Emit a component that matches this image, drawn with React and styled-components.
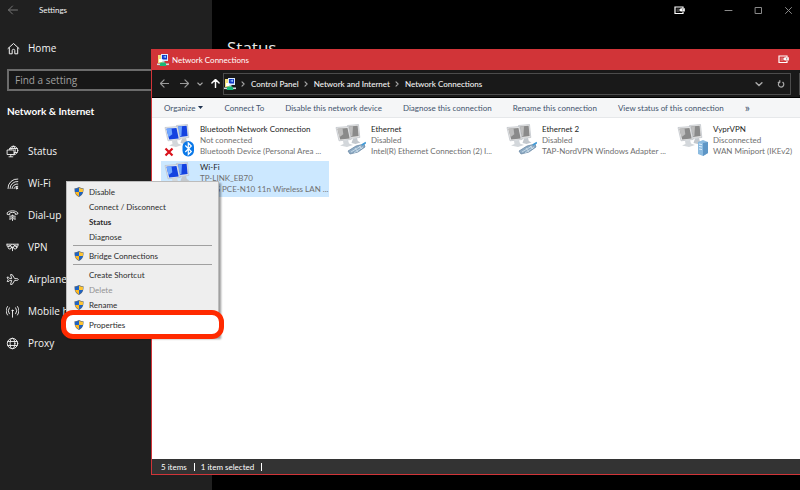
import styled, { createGlobalStyle, css } from 'styled-components';

const GlobalStyle = createGlobalStyle`
  * {
    box-sizing: border-box;
  }

  body {
    margin: 0;
    background-color: #000;
    font-family: 'Open Sans', 'Noto Sans', sans-serif;
  }

  button,
  input {
    margin: 0;
    padding: 0;
    border: none;
    background: none;
    font: inherit;
    color: inherit;
    text-align: left;
  }

  svg {
    display: block;
    flex-shrink: 0;
  }
`;

const Desktop = styled.div`
  position: relative;
  min-height: 100vh;
  display: flex;
  overflow: hidden;
  color: #fff;
`;

const Sidebar = styled.aside`
  width: 212px;
  flex-shrink: 0;
  background-color: #202020;
`;

const SettingsBar = styled.div`
  height: 20px;
  padding-left: 8px;
  display: flex;
  align-items: center;
  gap: 21px;
  font-family: Lato, 'Open Sans', sans-serif;
  font-size: 8px;
  color: #f2f2f2;
`;

const HomeLink = styled.a`
  height: 20px;
  margin-top: 18px;
  padding-left: 7px;
  display: flex;
  align-items: center;
  gap: 8px;
  font-size: 10px;
  color: #f4f4f4;
  text-decoration: none;
`;

const SearchInput = styled.input`
  display: block;
  width: 198px;
  height: 22px;
  margin: 11px 7px 0;
  padding: 0 6px;
  border: 2px solid #6b6b6b;
  background-color: #171717;
  font-size: 10px;

  &::placeholder {
    color: #a0a0a0;
    opacity: 1;
  }
`;

const GroupTitle = styled.h2`
  line-height: 16px;
  margin: 12px 7px 16px;
  font-family: Lato, 'Open Sans', sans-serif;
  font-size: 10px;
  font-weight: 700;
`;

const NavLink = styled.a`
  height: 32px;
  padding-left: 6px;
  display: flex;
  align-items: center;
  gap: 9px;
  font-size: 10px;
  color: #f4f4f4;
  text-decoration: none;
  white-space: nowrap;
`;

const Main = styled.main`
  flex-grow: 1;
  background-color: #000;
`;

const WindowButtons = styled.div`
  height: 20px;
  padding-right: 7px;
  display: flex;
  align-items: center;
  justify-content: flex-end;
  gap: 21px;

  button:first-child {
    margin-right: 18px;
  }
`;

const PageTitle = styled.h1`
  line-height: 24px;
  margin: 16px 0 0 15px;
  font-size: 17px;
  font-weight: 400;
  color: #e8e8e8;
`;

const Explorer = styled.section`
  position: absolute;
  top: 49px;
  right: 0;
  bottom: 15px;
  left: 151px;
  display: flex;
  flex-direction: column;
  border-left: 1px solid #d13438;
  border-bottom: 1px solid #d13438;
  background-color: #fff;
  font-family: Lato, 'Open Sans', sans-serif;
  font-size: 8px;
`;

const TitleBar = styled.header`
  height: 21px;
  padding: 0 11px 0 5px;
  display: flex;
  align-items: center;
  gap: 3px;
  background-color: #d13438;

  button {
    margin-left: auto;
  }
`;

const NavBar = styled.div`
  height: 28px;
  padding-left: 8px;
  display: flex;
  align-items: center;
  background-color: #191919;
  border-bottom: 1px solid #000;
`;

const NavButtons = styled.div`
  width: 63px;
  display: flex;
  align-items: center;
  gap: 8px;
  flex-shrink: 0;

  button:first-child {
    margin-right: 3px;
  }
`;

const AddressBar = styled.div`
  height: 22px;
  flex-grow: 1;
  padding-right: 5px;
  display: flex;
  align-items: center;
  border: 1px solid #4c4c4c;
  white-space: nowrap;
`;

const Crumb = styled.a`
  display: flex;
  align-items: center;
  color: #f4f4f4;
  font-weight: 500;
  text-decoration: none;

  svg {
    margin: 0 5px 0 4px;
  }
`;

const AddressActions = styled.div`
  margin-left: auto;
  display: flex;
  gap: 14px;
`;

const SearchBox = styled.div`
  width: 1px;
  height: 22px;
  margin-left: 8px;
  background-color: #4c4c4c;
`;

const CommandBar = styled.div`
  height: 20px;
  padding-left: 12px;
  display: flex;
  align-items: center;
  gap: 21px;
  background-color: #f5f6f7;
  border-bottom: 1px solid #e6e8ea;
  color: #43546d;
  white-space: nowrap;
`;

const Command = styled.button`
  display: flex;
  align-items: center;
  gap: 3px;
`;

const Overflow = styled(Command)`
  font-size: 12px;
  line-height: 12px;
`;

const Connections = styled.div`
  flex-grow: 1;
  padding: 5px 0 0 9px;
  display: grid;
  grid-template-columns: repeat(4, 168px);
  grid-auto-rows: 36px;
  gap: 2px 3px;
  overflow: hidden;
`;

const ConnectionItem = styled.button`
  padding: 1px 3px;
  display: flex;
  gap: 5px;
  color: #6f6f6f;
  line-height: 11px;
  white-space: nowrap;

  ${({ $selected }) =>
    $selected &&
    css`
      background-color: #cce8ff;
    `}
`;

const ConnectionName = styled.div`
  color: #1e1e1e;
`;

const StatusBar = styled.footer`
  height: 15px;
  padding-left: 9px;
  display: flex;
  align-items: center;
  background-color: #333;

  span {
    padding-right: 7px;
    margin-right: 6px;
    line-height: 8px;
    border-right: 1px solid #fff;
  }
`;

const Menu = styled.div`
  position: absolute;
  top: 181px;
  left: 66px;
  width: 153px;
  padding: 2px 0 4px;
  border: 1px solid #bcbcbc;
  background-color: #eee;
  box-shadow: 2px 2px 2px rgba(0, 0, 0, 0.4);
  font-family: Lato, 'Open Sans', sans-serif;
  font-size: 8px;
  color: #2c2c2c;
`;

const MenuItem = styled.button`
  position: relative;
  width: 100%;
  height: 15px;
  padding-left: 7px;
  display: flex;
  align-items: center;
  gap: 5px;
  font-weight: ${({ $default }) => ($default ? 700 : 400)};

  &:disabled {
    color: #939393;
  }
`;

const IconSlot = styled.span`
  width: 10px;
  height: 10px;
`;

const Separator = styled.hr`
  height: 1px;
  margin: 1px 6px 2px;
  border: none;
  background-color: #a0a0a0;
`;

const Highlight = styled.span`
  position: absolute;
  inset: -7px -6px;
  border: 5px solid #ff2a00;
  border-radius: 12px;
  background-color: #fff;
`;

const HighlightedItem = styled(MenuItem)`
  margin-top: 5px;

  > :not(${Highlight}) {
    position: relative;
  }
`;

const LineIcon = ({ size = 13, box = 13, children, ...rest }) => (
  <svg
    width={size}
    height={size}
    viewBox={`0 0 ${box} ${box}`}
    fill="none"
    stroke="currentColor"
    strokeLinecap="round"
    strokeLinejoin="round"
    {...rest}
  >
    {children}
  </svg>
);

const ArrowIcon = ({ color, rotate = 0, size = 9, width = 1.3 }) => (
  <LineIcon size={size} box={10} stroke={color} strokeWidth={width}>
    <path d="M9.5 5h-9M4.5 1l-4 4 4 4" transform={`rotate(${rotate} 5 5)`} />
  </LineIcon>
);

const ChevronIcon = ({ down, size = 6 }) => (
  <LineIcon size={size} box={6} stroke="#a8a8a8" strokeWidth="1.1">
    <path d={down ? 'M.8 2l2.2 2.2L5.2 2' : 'M2 .9L4.1 3 2 5.1'} />
  </LineIcon>
);

const HomeIcon = () => (
  <LineIcon>
    <path d="M1 6.5L6.5 1.5 12 6.5M2.3 5.8v6h2.9V8.6a1.3 1.3 0 0 1 2.6 0v3.2h2.9v-6" />
  </LineIcon>
);

const TabletIcon = () => (
  <svg width="11" height="9" viewBox="0 0 11 9">
    <path d="M9 2V1H1v6.5h8V6" fill="none" stroke="#fff" strokeWidth="1.2" />
    <path d="M2.5 2.5h3V6h-3z" fill="#fff" opacity=".25" />
    <path d="M5 3.9l1.7-1.6h4.1v3.2H6.7z" fill="#fff" />
    <path d="M8 3.9h1.3" stroke="#666" />
  </svg>
);

const navIcons = {
  status: (
    <>
      <circle cx="7.5" cy="5.5" r="4.3" />
      <path d="M7.5 1.2C5 3 5 4 5 5M7.5 1.2C10 4 10 7 7.5 9.8M3.8 3.5h7.4M8 7.5h3" />
      <path d="M1.5 5H8v4.5H1.5zM4.8 9.5v2M3 11.8h3.8" fill="#202020" />
    </>
  ),
  wifi: (
    <>
      <path d="M2 11.5A9 9 0 0 1 11.8 2M4 11.5A7 7 0 0 1 11.8 4.5M6 11.5A5 5 0 0 1 11.8 7M8 11.5a3.5 3.5 0 0 1 3.8-2.3" />
      <circle cx="10.8" cy="11.2" r=".8" fill="currentColor" />
    </>
  ),
  dialup: (
    <>
      <path d="M1.2 5V3.8C3.5 1.2 9.5 1.2 11.8 3.8V5L9.3 5.4V4C8 3.2 5 3.2 3.7 4v1.4z" />
      <path d="M4 7.2v3.5M6.5 6v5.5M9 7.2v3.5M5.2 6.5v4M7.8 6.5v4" strokeDasharray="1.2 1" />
    </>
  ),
  vpn: (
    <>
      <path d="M1 3.2h11M1 3.2v2h3l1.3-1.5M12 3.2v2H9L7.7 3.7" />
      <circle cx="3.8" cy="6.3" r="1.7" />
      <circle cx="9.2" cy="6.3" r="1.7" />
      <path d="M5.5 6.2h2M6.5 6.5v3.2" />
    </>
  ),
  airplane: (
    <path d="M1.2 4.5l1 2-1 2h1.6l.9-1.1h2l-1.2 4h1.7l2.5-4h2.1c2 0 2-1.8 0-1.8H8.7l-2.5-4H4.5l1.2 4h-2L2.8 4.5z" />
  ),
  hotspot: (
    <>
      <path d="M3.3 2.8a4.8 4.8 0 0 0 0 6M9.7 2.8a4.8 4.8 0 0 1 0 6M1.5 1.5a7.5 7.5 0 0 0 0 8.5M11.5 1.5a7.5 7.5 0 0 1 0 8.5" />
      <circle cx="6.5" cy="5.6" r=".6" fill="currentColor" />
      <path d="M6.5 6.2v6" />
    </>
  ),
  proxy: (
    <>
      <circle cx="6.5" cy="6.5" r="5.2" />
      <ellipse cx="6.5" cy="6.5" rx="2.4" ry="5.2" />
      <path d="M1.8 4.5h9.4M1.8 8.5h9.4" />
    </>
  ),
};

const ControlPanelIcon = () => (
  <svg width="12" height="12" viewBox="0 0 12 12">
    <path d="M1 1h6v8H1z" fill="#f3df7d" />
    <path d="M4 0h7v7H4z" fill="#dcecff" />
    <path d="M5 1h5v4.5H5z" fill="#1238c8" />
    <path d="M6 3l3-1.5V4z" fill="#8fc3ff" />
    <path d="M2 5h3.5v3H2z" fill="#fff" />
    <path d="M5.5 7h2v2h-2z" fill="#bfc6cf" />
    <path d="M0 9.5h12v1.6H0z" fill="#d6dde2" />
    <path d="M3.5 8.5h5L9.5 12h-7z" fill="#17b978" />
  </svg>
);

const RefreshIcon = () => (
  <LineIcon size={8} box={8} stroke="#a8a8a8" strokeWidth="1.2">
    <path d="M5.8 2.3a2.7 2.7 0 1 1-3.3-.1M2.8.6v1.7H1.2" />
  </LineIcon>
);

const ShieldIcon = () => (
  <svg width="10" height="10" viewBox="0 0 10 10">
    <path d="M5 0c1.5 1 3 1.3 4.5 1.3C9.7 5.5 8.5 8.5 5 10 1.5 8.5.3 5.5.5 1.3 2 1.3 3.5 1 5 0z" fill="#5f6a77" />
    <path d="M5 .8V5H1.2C1 4 1 3 1 1.9 2.5 1.9 4 1.5 5 .8z" fill="#1e63c4" />
    <path d="M5 .8V5h3.8C9 4 9 3 9 1.9 7.5 1.9 6 1.5 5 .8z" fill="#ffc533" />
    <path d="M5 9.3V5H1.2C1.7 7 3 8.5 5 9.3z" fill="#ffb91f" />
    <path d="M5 9.3V5h3.8C8.3 7 7 8.5 5 9.3z" fill="#1e63c4" />
  </svg>
);

const badges = {
  bluetooth: (
    <>
      <path d="M1.5 24.5l7 7M8.5 24.5l-7 7" stroke="#d9121b" strokeWidth="2.2" />
      <rect x="18.5" y="17" width="11.5" height="15.5" rx="5.7" fill="#0a78e8" />
      <path d="M21.3 21.5l6 6-3 3V19l3 3-6 6" fill="none" stroke="#fff" strokeWidth="1.2" />
    </>
  ),
  wifi: <path d="M28 19h3v2h-3z" fill="#3cae55" />,
  cable: (
    <>
      <path d="M13 27l8-5 8-2 1 3-7 5-8 2z" fill="#8eabc4" stroke="#60809e" strokeWidth=".7" />
      <path d="M16 28l10-6M19 29l9-6M20 24l3 4M24 22l3 3" stroke="#d3e3ef" strokeWidth=".8" />
      <path d="M27 21l4-2.5" stroke="#3f9ad8" strokeWidth="1.8" />
    </>
  ),
  server: (
    <>
      <path d="M21 18l5-2 5 2v11l-5 3-5-2z" fill="#8cbbe0" />
      <path d="M26 19l5-1v11l-5 3z" fill="#5e96c6" />
      <path d="M22 20l3 .5M22 22.5l3 .5M22 25l3 .5" stroke="#e0f1ff" />
    </>
  ),
};

const ComputersIcon = ({ active, badge }) => {
  const screen = active ? '#1442e0' : '#8a8a8a';
  const glare = active ? '#6fa6ff' : '#bdbdbd';
  const frame = active ? '#dfe6f0' : '#e6e6e6';
  return (
    <svg width="31" height="34" viewBox="0 0 31 34">
      <path d="M12.5 1.5l11-1 1.3 13-10 1z" fill={frame} stroke="#b4b9c0" strokeWidth=".6" />
      <path d="M14 2.6l8.6-.8 1 10.3-7.8 1z" fill={screen} />
      <path d="M14 2.6l4-.4-.6 9.9-1.6.4z" fill={glare} />
      <path d="M18 14.5l4-.5.8 3 2.7 1.5-5 1.5-4-1z" fill="#c3c8cd" />
      <path d="M1 3.5L13.5 2.5l2.7 13L4 16.8z" fill={frame} stroke="#b4b9c0" strokeWidth=".6" />
      <path d="M2.5 4.7l10-.8 2.2 10.5-9.5 1.1z" fill={screen} />
      <path d="M2.5 4.7l5-.4.8 6-3.9 3z" fill={glare} />
      <path d="M8 16.7l5-.6 1 3.4 4 1.5-6 2-7-1.5 3.5-1.5z" fill="#d3d7db" />
      {badges[badge]}
    </svg>
  );
};

const navLinks = [
  { label: 'Status', icon: 'status' },
  { label: 'Wi-Fi', icon: 'wifi' },
  { label: 'Dial-up', icon: 'dialup' },
  { label: 'VPN', icon: 'vpn' },
  { label: 'Airplane mode', icon: 'airplane' },
  { label: 'Mobile hotspot', icon: 'hotspot' },
  { label: 'Proxy', icon: 'proxy' },
];

const crumbs = ['Control Panel', 'Network and Internet', 'Network Connections'];

const commands = [
  'Connect To',
  'Disable this network device',
  'Diagnose this connection',
  'Rename this connection',
  'View status of this connection',
];

const connections = [
  {
    name: 'Bluetooth Network Connection',
    state: 'Not connected',
    device: 'Bluetooth Device (Personal Area ...',
    badge: 'bluetooth',
    active: true,
  },
  {
    name: 'Ethernet',
    state: 'Disabled',
    device: 'Intel(R) Ethernet Connection (2) I...',
    badge: 'cable',
  },
  {
    name: 'Ethernet 2',
    state: 'Disabled',
    device: 'TAP-NordVPN Windows Adapter ...',
    badge: 'cable',
  },
  {
    name: 'VyprVPN',
    state: 'Disconnected',
    device: 'WAN Miniport (IKEv2)',
    badge: 'server',
  },
  {
    name: 'Wi-Fi',
    state: 'TP-LINK_EB70',
    device: 'ASUS PCE-N10 11n Wireless LAN ...',
    badge: 'wifi',
    active: true,
    selected: true,
  },
];

const menuGroups = [
  [
    { label: 'Disable', shield: true },
    { label: 'Connect / Disconnect' },
    { label: 'Status', isDefault: true },
    { label: 'Diagnose' },
  ],
  [{ label: 'Bridge Connections', shield: true }],
  [
    { label: 'Create Shortcut' },
    { label: 'Delete', shield: true, disabled: true },
    { label: 'Rename', shield: true },
  ],
];

function Settings() {
  return (
    <>
      <Sidebar>
        <SettingsBar>
          <button aria-label="Back">
            <ArrowIcon color="#777" size={10} width={1} />
          </button>
          Settings
        </SettingsBar>
        <HomeLink href="#home">
          <HomeIcon />
          Home
        </HomeLink>
        <SearchInput placeholder="Find a setting" aria-label="Find a setting" />
        <GroupTitle>Network &amp; Internet</GroupTitle>
        <nav>
          {navLinks.map(({ label, icon }) => (
            <NavLink href={`#${icon}`} key={icon}>
              <LineIcon strokeWidth=".9">{navIcons[icon]}</LineIcon>
              {label}
            </NavLink>
          ))}
        </nav>
      </Sidebar>
      <Main>
        <WindowButtons>
          <button aria-label="Tablet mode">
            <TabletIcon />
          </button>
          <button aria-label="Minimize">
            <LineIcon size={9} box={9} stroke="#8a8a8a">
              <path d="M1 4.5h7" />
            </LineIcon>
          </button>
          <button aria-label="Maximize">
            <LineIcon size={9} box={9} stroke="#8a8a8a">
              <path d="M1.5 1.5h6v6h-6z" />
            </LineIcon>
          </button>
          <button aria-label="Close">
            <LineIcon size={9} box={9} stroke="#8a8a8a">
              <path d="M1.5 1.5l6 6M7.5 1.5l-6 6" />
            </LineIcon>
          </button>
        </WindowButtons>
        <PageTitle>Status</PageTitle>
      </Main>
    </>
  );
}

function NetworkConnections() {
  return (
    <Explorer>
      <TitleBar>
        <ControlPanelIcon />
        Network Connections
        <button aria-label="Tablet mode">
          <TabletIcon />
        </button>
      </TitleBar>
      <NavBar>
        <NavButtons>
          <button aria-label="Back">
            <ArrowIcon color="#9a9a9a" />
          </button>
          <button aria-label="Forward">
            <ArrowIcon color="#9a9a9a" rotate={180} />
          </button>
          <button aria-label="Recent locations">
            <ChevronIcon down />
          </button>
          <button aria-label="Up">
            <ArrowIcon color="#fff" rotate={90} width={1.6} />
          </button>
        </NavButtons>
        <AddressBar>
          <ControlPanelIcon />
          {crumbs.map((crumb) => (
            <Crumb href="#" key={crumb}>
              <ChevronIcon />
              {crumb}
            </Crumb>
          ))}
          <AddressActions>
            <button aria-label="Previous locations">
              <ChevronIcon down size={8} />
            </button>
            <button aria-label="Refresh">
              <RefreshIcon />
            </button>
          </AddressActions>
        </AddressBar>
        <SearchBox />
      </NavBar>
      <CommandBar>
        <Command>
          Organize
          <svg width="5" height="3" viewBox="0 0 5 3">
            <path d="M0 0h5L2.5 3z" fill="#1f3350" />
          </svg>
        </Command>
        {commands.map((command) => (
          <Command key={command}>{command}</Command>
        ))}
        <Overflow>»</Overflow>
      </CommandBar>
      <Connections>
        {connections.map(({ name, state, device, badge, active, selected }) => (
          <ConnectionItem key={name} $selected={selected}>
            <ComputersIcon active={active} badge={badge} />
            <div>
              <ConnectionName>{name}</ConnectionName>
              <div>{state}</div>
              <div>{device}</div>
            </div>
          </ConnectionItem>
        ))}
      </Connections>
      <StatusBar>
        <span>5 items</span>
        <span>1 item selected</span>
      </StatusBar>
    </Explorer>
  );
}

function ContextMenu() {
  return (
    <Menu>
      {menuGroups.map((group, index) => (
        <div key={index}>
          {index > 0 && <Separator />}
          {group.map(({ label, shield, isDefault, disabled }) => (
            <MenuItem key={label} $default={isDefault} disabled={disabled}>
              <IconSlot>{shield && <ShieldIcon />}</IconSlot>
              {label}
            </MenuItem>
          ))}
        </div>
      ))}
      <HighlightedItem>
        <Highlight />
        <IconSlot>
          <ShieldIcon />
        </IconSlot>
        <span>Properties</span>
      </HighlightedItem>
    </Menu>
  );
}

function App() {
  return (
    <Desktop>
      <GlobalStyle />
      <Settings />
      <NetworkConnections />
      <ContextMenu />
    </Desktop>
  );
}

export default App;
